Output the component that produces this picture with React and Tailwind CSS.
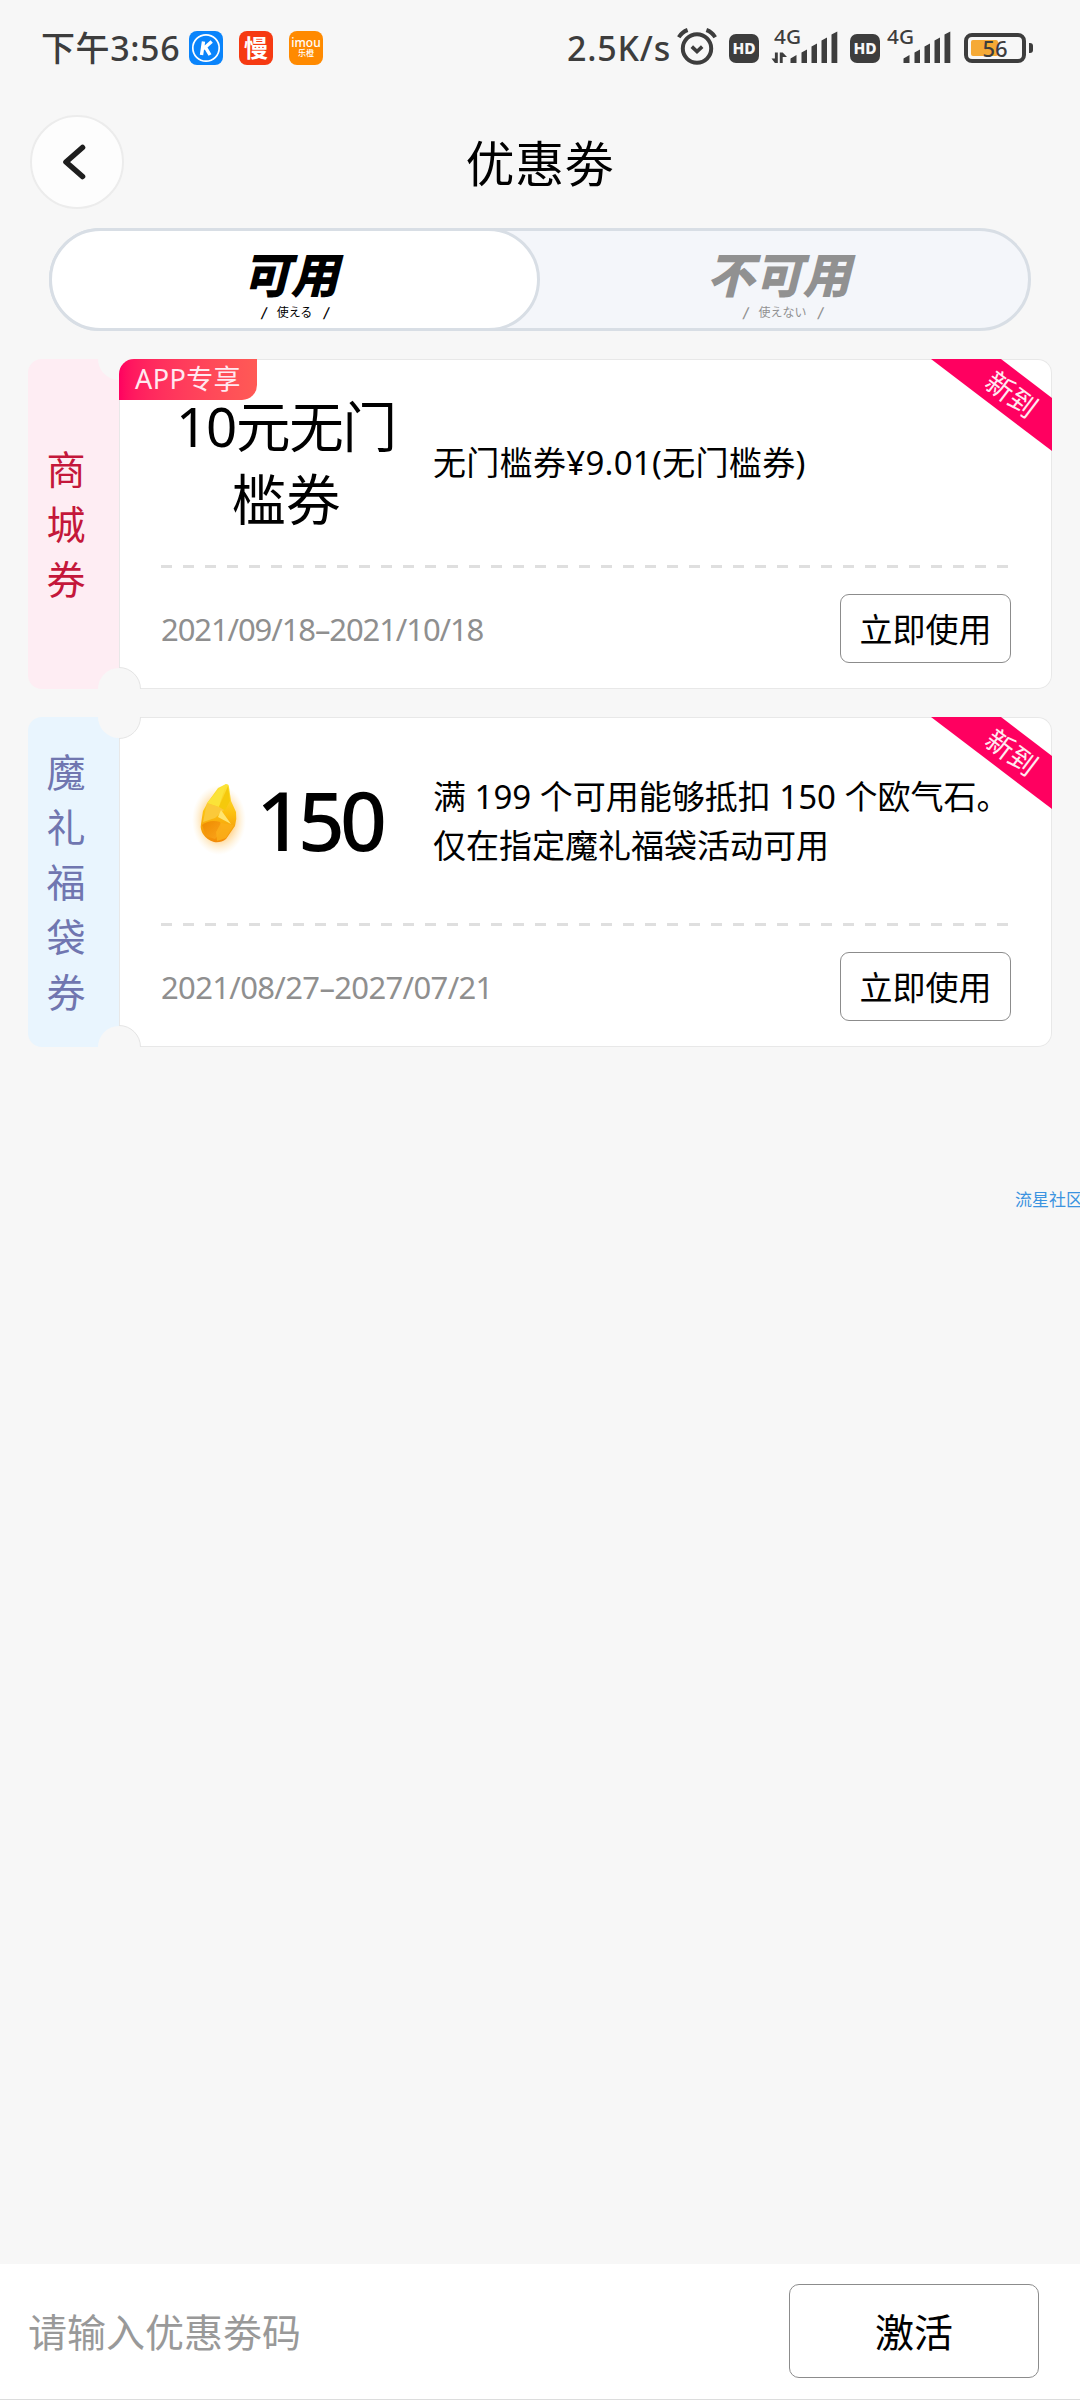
import React from 'react'
import clsx from 'clsx'

const COUPONS = [
  {
    id: 1,
    type: '商城券',
    panel: 'bg-[#feedf3] text-[#c4173a]',
    badge: 'APP专享',
    title: ['10元无门', '槛券'],
    desc: ['无门槛券¥9.01(无门槛券)'],
    descClass: 'tracking-[0.3px]',
    date: '2021/09/18–2021/10/18',
    dateClass: 'tracking-[-1.1px]',
  },
  {
    id: 2,
    type: '魔礼福袋券',
    panel: 'bg-[#e9f5fe] text-[#7076b0]',
    amount: '150',
    desc: ['满 199 个可用能够抵扣 150 个欧气石。', '仅在指定魔礼福袋活动可用'],
    date: '2021/08/27–2027/07/21',
    dateClass: 'tracking-[-0.65px]',
  },
]

function AlarmIcon() {
  return (
    <svg width="40" height="38" viewBox="0 0 40 38" fill="none" stroke="#3d3d3d">
      <circle cx="20" cy="20.5" r="14.2" strokeWidth="4" />
      <path d="M14.8 18.6l5.2 5 5.2-5" strokeWidth="3.6" />
      <path d="M1.8 9.2Q5 4 10.6 2M38.2 9.2Q35 4 29.4 2" strokeWidth="4" />
    </svg>
  )
}

function HdIcon() {
  return (
    <span className="w-[30px] h-[29px] rounded-[7px] bg-[#3d3d3d] text-[#f7f7f7] text-[15.5px] leading-[29px] font-extrabold text-center">
      HD
    </span>
  )
}

function Signal({ data }) {
  return (
    <svg className="overflow-visible" width="66" height="36" viewBox="0 0 66 36" fill="#3d3d3d">
      <text x="2" y="15.5" fontSize="19.5" fontWeight="500" textLength="27" lengthAdjust="spacingAndGlyphs">4G</text>
      {data && <path d="M5.800 24.500V35H2.900L-0.500 30.500h3.400v-6zM7.800 35V24.500h2.900L15 29h-4.300v6z" />}
      <path d="M18.500 30.500l6-3.500v8h-6zM29.500 24.500l5.500-3v13.500h-5.500zM39.500 18.500l5.500-3v19.500h-5.500zM49.500 12.500l5.500-3v25.500h-5.500zM59.500 6.500l5.800-3v31.500h-5.800z" />
    </svg>
  )
}

function StatusBar() {
  return (
    <div className="flex items-start h-[96px] pt-[28px] pl-[41px] pr-[47px] text-[#3d3d3d] font-medium">
      <span className="w-[139px] mr-[9px] text-[34px] leading-[40px] whitespace-nowrap tracking-[0.6px]">下午3:56</span>
      <div className="flex gap-4 pt-[3px]">
        <svg width="34" height="34" viewBox="0 0 34 34">
          <rect width="34" height="34" rx="8" fill="#0a84fb" />
          <circle cx="17" cy="17" r="13.2" fill="none" stroke="#fff" strokeWidth="1.7" />
          <path d="M14.500 10.500l-2 13.500M22.700 10.500l-8.200 7.200M16.200 15.800l4.800 8.200" stroke="#fff" strokeWidth="3.400" />
        </svg>
        <span className="w-[34px] h-[34px] rounded-lg bg-[#f63a12] text-white text-[24px] leading-[33px] font-bold text-center">慢</span>
        <span className="w-[34px] h-[34px] rounded-lg bg-[#ff8a00] text-white flex flex-col items-center pt-[7px]">
          <span className="text-[12px] leading-[10px] font-medium">imou</span>
          <span className="text-[8px] leading-[9px]">乐橙</span>
        </span>
      </div>
      <div className="flex ml-auto">
        <span className="text-[34px] leading-[40px] mr-[6px] tracking-[0.8px]">2.5K/s</span>
        <span className="mr-[12px]"><AlarmIcon /></span>
        <span className="pt-[6px] flex mr-[13px]"><HdIcon /></span>
        <span className="mr-[12px]"><Signal data /></span>
        <span className="pt-[6px] flex mr-[5px]"><HdIcon /></span>
        <span className="mr-[13px]"><Signal /></span>
        <span className="pt-[5px] flex items-center h-[35px]">
          <span className="relative w-[62px] h-[30px] rounded-[8px] border-4 border-[#3d3d3d]">
            <span className="absolute left-[3px] top-[3px] w-[27px] h-[16px] rounded-[2px] bg-[#f5a935]" />
            <span className="absolute inset-0 text-[22px] leading-[23px] text-center">56</span>
          </span>
          <span className="ml-[3px] w-[4px] h-[10px] rounded-r-[3px] bg-[#3d3d3d]" />
        </span>
      </div>
    </div>
  )
}

function Header() {
  return (
    <header className="grid grid-cols-[94px_1fr_94px] items-center px-[30px] h-[132px]">
      <button className="w-[94px] h-[94px] rounded-full bg-[#fdfdfd] border-2 border-[#ececec] flex items-center justify-center pr-[5px]">
        <svg width="24" height="38" viewBox="0 0 24 38" fill="none" stroke="#1e1e1e" strokeWidth="5.6" strokeLinecap="round" strokeLinejoin="round">
          <path d="M19.500 4.500L3 19l16.500 14.500" />
        </svg>
      </button>
      <h1 className="text-[49px] leading-[60px] text-center text-black tracking-[0.6px] pt-[2px]">优惠劵</h1>
    </header>
  )
}

function TabLabel({ label, sub }) {
  return (
    <>
      <span className="mr-[8px] text-[48px] leading-[46px] font-black italic">{label}</span>
      <span className="mt-[7px] flex gap-[11px] text-[12px] leading-[14px] font-['Noto_Sans_CJK_JP',sans-serif]">
        <i className="font-black">/</i>
        {sub}
        <i className="font-black">/</i>
      </span>
    </>
  )
}

function Tabs() {
  return (
    <div className="mx-[49px] h-[103px] flex rounded-full border-[3px] border-[#d8dee5] bg-[#f4f6fa]">
      <button className="-m-[3px] w-[491px] rounded-full border-[3px] border-[#d8dee5] bg-white text-black flex flex-col items-center pt-[21px]">
        <TabLabel label="可用" sub="使える" />
      </button>
      <button className="flex-1 text-[#919191] flex flex-col items-center pt-[21px]">
        <TabLabel label="不可用" sub="使えない" />
      </button>
    </div>
  )
}

function Gem() {
  return (
    <svg className="-mt-[10px]" width="56" height="84" viewBox="0 0 56 84">
      <defs>
        <radialGradient id="glow">
          <stop offset="0.45" stopColor="#ffb43c" stopOpacity="0.75" />
          <stop offset="1" stopColor="#ffe2a8" stopOpacity="0" />
        </radialGradient>
        <linearGradient id="gem" x1="0" y1="0" x2="0" y2="1">
          <stop offset="0" stopColor="#fbe53a" />
          <stop offset="0.5" stopColor="#fcc010" />
          <stop offset="1" stopColor="#f28a08" />
        </linearGradient>
        <linearGradient id="base" x1="0" y1="0" x2="1" y2="1">
          <stop offset="0" stopColor="#ee8a00" />
          <stop offset="1" stopColor="#fba51b" />
        </linearGradient>
      </defs>
      <ellipse cx="29" cy="47" rx="27" ry="35" fill="url(#glow)" />
      <path d="M36 11q3 0 3 3l2 14 5 11q1 7-1 14l-9 13q-5 4-12 3-7-2-11-8-3-5-2-10l2-13 5-9 10-14z" fill="url(#gem)" />
      <path d="M36 11l-7 23-12-4 11-13z" fill="#fbe338" />
      <path d="M38 13l2 15-5 9-6-3z" fill="#f5c90c" />
      <path d="M17 30l12 4 5 3-9 8-12 4z" fill="#fbc93a" />
      <path d="M31 37l10 14-13-7z" fill="#ffe570" />
      <path d="M12 52q8-6 18-3l2 8-7 9-9-3z" fill="url(#base)" />
      <path d="M31 50l13 2-8 13-9 3-1-9z" fill="#fbb01a" opacity="0.8" />
    </svg>
  )
}

function Coupon({ coupon }) {
  return (
    <div className="flex h-[330px]">
      <div className={clsx('relative overflow-hidden w-[91px] rounded-l-[14px] flex flex-col items-center justify-center pr-[15px] pb-[1px]', coupon.panel)}>
        {[...coupon.type].map((char) => (
          <span key={char} className="text-[39px] leading-[55px]">{char}</span>
        ))}
        <i className="absolute -right-[21px] -top-[21px] size-[42px] rounded-full bg-[#f7f7f7]" />
        <i className="absolute -right-[21px] -bottom-[21px] size-[42px] rounded-full bg-[#f7f7f7]" />
      </div>

      <div className="relative overflow-hidden flex-1 rounded-r-[14px] bg-white shadow-[inset_0_0_0_1px_#e8e8e8] pl-[42px] pr-[41px]">
        <div className="flex h-[206px]">
          <div className="w-[250px] flex items-center justify-center text-black">
            {coupon.title && (
              <div className="text-[54.5px] leading-[73px] text-center pt-[1px]">
                {coupon.title.map((line, i) => (
                  <p key={line} className={i === 0 ? 'tracking-[-1.2px]' : ''}>{line}</p>
                ))}
              </div>
            )}
            {coupon.amount && (
              <>
                <Gem />
                <span className="ml-[10px] -mt-[3px] text-[82px] leading-[90px] font-medium tracking-[-5px]">{coupon.amount}</span>
              </>
            )}
          </div>
          <div className={clsx('ml-[22px] flex flex-col justify-center whitespace-nowrap text-[33px] leading-[49px] text-black pt-[1px]', coupon.descClass)}>
            {coupon.desc.map((line) => <p key={line}>{line}</p>)}
          </div>
        </div>
        <div className="h-[3px] bg-[repeating-linear-gradient(90deg,#dfdfdf_0_11px,transparent_11px_22px)]" />
        <div className="flex items-center justify-between mt-[26px]">
          <span className={clsx('text-[31px] leading-[40px] text-[#8f8f8f]', coupon.dateClass)}>{coupon.date}</span>
          <button className="w-[171px] h-[69px] rounded-[9px] border border-[#8c8c8c] text-[33px] text-black pt-[2px]">
            立即使用
          </button>
        </div>

        <i className="absolute -left-[22px] -top-[22px] size-[44px] rounded-full bg-[#f7f7f7] border border-[#e4e4e4]" />
        <i className="absolute -left-[22px] -bottom-[22px] size-[44px] rounded-full bg-[#f7f7f7] border border-[#e4e4e4]" />
        {coupon.badge && (
          <span className="absolute left-0 top-0 w-[138px] h-[41px] rounded-tl-[15px] rounded-br-[15px] bg-linear-to-r from-[#ff0060] to-[#ff5a55] text-[#ffe9f0] text-[27px] leading-[40px] text-center tracking-[0.4px]">
            {coupon.badge}
          </span>
        )}
        <div className="absolute right-0 top-0 w-[121px] h-[92px]">
          <svg width="121" height="92" className="absolute">
            <path d="M0 0h70l51 39v53z" fill="#ff0060" />
          </svg>
          <span className="absolute left-[51px] top-[19px] w-[60px] h-[32px] rotate-[37deg] text-center text-[28px] leading-[32px] text-[#ffe9f0]">新到</span>
        </div>
      </div>
    </div>
  )
}

export default function App() {
  return (
    <div className="relative w-[1080px] h-[2400px] overflow-hidden bg-[#f7f7f7] flex flex-col font-['Noto_Sans','Noto_Sans_CJK_SC',sans-serif]">
      <StatusBar />
      <Header />
      <Tabs />
      <main className="flex-1 flex flex-col gap-[28px] pt-[28px] px-[28px]">
        {COUPONS.map((coupon) => <Coupon key={coupon.id} coupon={coupon} />)}
      </main>
      <footer className="h-[136px] bg-white border-b border-[#dcdcdc] flex items-center justify-between pl-[28px] pr-[41px]">
        <span className="text-[39px] text-[#999] pt-[2px]">请输入优惠劵码</span>
        <button className="w-[250px] h-[94px] -mt-[2px] rounded-[10px] border border-[#8c8c8c] text-[39px] text-black pt-[3px]">激活</button>
      </footer>
      <span className="absolute left-[1015px] top-[1190px] text-[17px] leading-[20px] text-[#3b93e0] whitespace-nowrap">流星社区</span>
    </div>
  )
}
